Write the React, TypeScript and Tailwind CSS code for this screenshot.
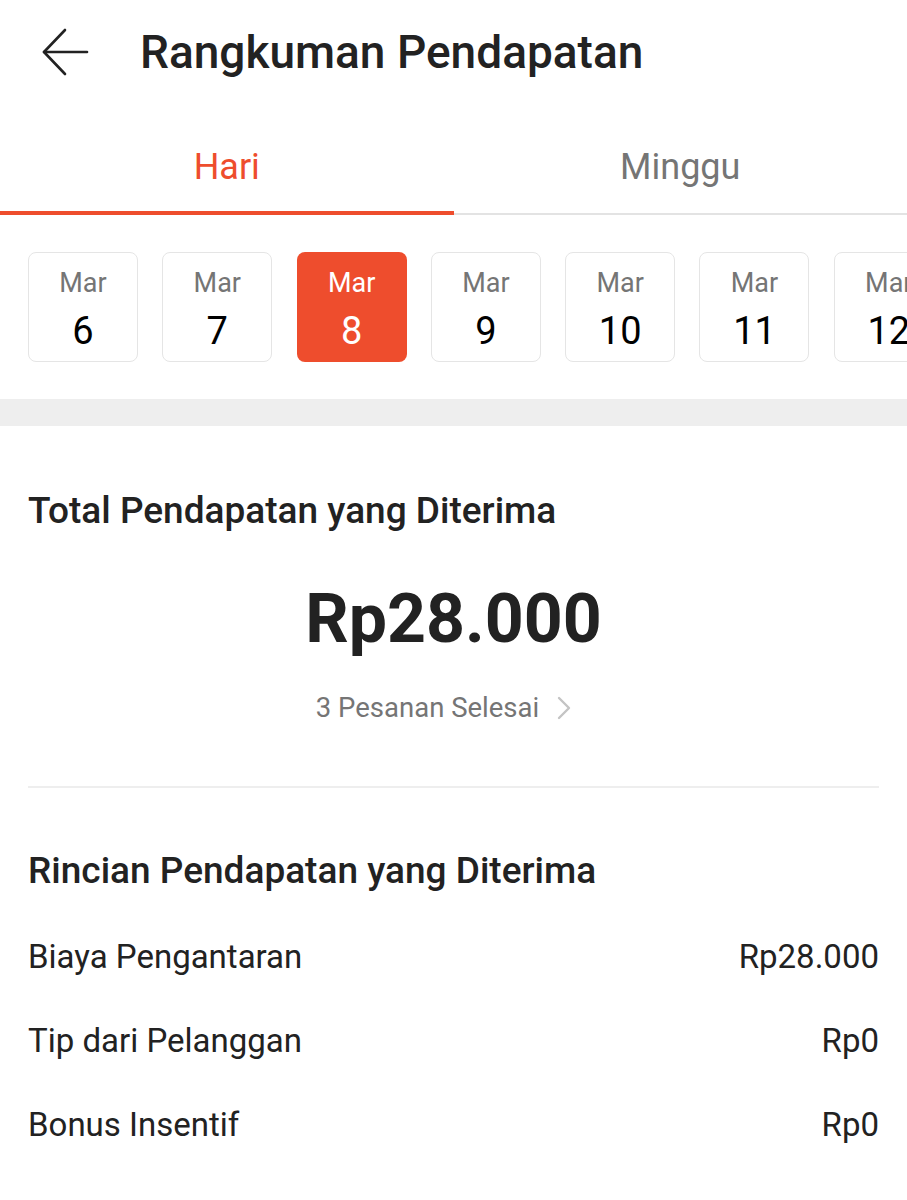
import React, { useState } from 'react';

interface DateItem {
    month: string;
    day: number;
}

const dates: DateItem[] = [
    { month: 'Mar', day: 6 },
    { month: 'Mar', day: 7 },
    { month: 'Mar', day: 8 },
    { month: 'Mar', day: 9 },
    { month: 'Mar', day: 10 },
    { month: 'Mar', day: 11 },
    { month: 'Mar', day: 12 },
];

const breakdown = [
    { label: 'Biaya Pengantaran', value: 'Rp28.000' },
    { label: 'Tip dari Pelanggan', value: 'Rp0' },
    { label: 'Bonus Insentif', value: 'Rp0' },
];

const App: React.FC = () => {
    const [tab, setTab] = useState<'day' | 'week'>('day');
    const [selected, setSelected] = useState(8);

    return (
        <div className="min-h-[1200px] w-full bg-white font-['Roboto',sans-serif] text-[#222222] overflow-hidden">
            {/* header */}
            <header className="flex items-center h-[104px] pl-[40px]">
                <button className="w-[50px] h-[50px] flex items-center justify-center text-[#222222]">
                    <svg width="48" height="48" viewBox="0 0 48 48" fill="none" stroke="currentColor" strokeWidth="2.6" strokeLinecap="round" strokeLinejoin="round">
                        <path d="M46 24H3" />
                        <path d="M24 2L3 24l21 22" />
                    </svg>
                </button>
                <h1 className="ml-[50px] text-[46px] font-medium leading-none">Rangkuman Pendapatan</h1>
            </header>

            {/* tabs */}
            <div className="flex h-[111px] border-b-2 border-[#e3e3e3]">
                <button
                    onClick={() => setTab('day')}
                    className={`flex-1 flex items-center justify-center pt-[18px] text-[36px] -mb-[2px] border-b-4 ${tab === 'day' ? 'text-[#ee4d2d] border-[#ee4d2d]' : 'text-[#757575] border-transparent'}`}
                >
                    Hari
                </button>
                <button
                    onClick={() => setTab('week')}
                    className={`flex-1 flex items-center justify-center pt-[18px] text-[36px] -mb-[2px] border-b-4 ${tab === 'week' ? 'text-[#ee4d2d] border-[#ee4d2d]' : 'text-[#757575] border-transparent'}`}
                >
                    Minggu
                </button>
            </div>

            <div className="flex gap-[24.3px] pl-[28px] pt-[37px] pb-[37px] overflow-hidden">
                {dates.map(d => {
                    const active = d.day === selected;
                    return (
                        <button
                            key={d.day}
                            onClick={() => setSelected(d.day)}
                            className={`shrink-0 w-[110px] h-[110px] rounded-[8px] flex flex-col items-center justify-center pt-[5px] ${active ? 'bg-[#ee4d2d] text-white' : 'bg-white border border-[#e5e5e5]'}`}
                        >
                            <span className={`text-[27px] leading-none ${active ? 'text-white' : 'text-[#757575]'}`}>{d.month}</span>
                            <span className={`mt-[15px] text-[38px] leading-none ${active ? 'text-white' : 'text-black'}`}>{d.day}</span>
                        </button>
                    );
                })}
            </div>

            <div className="h-[27px] bg-[#eeeeee]" />

            {/* total */}
            <section className="px-[28px]">
                <h2 className="pt-[66px] text-[37px] font-medium leading-none">Total Pendapatan yang Diterima</h2>
                <div className="mt-[56px] text-center text-[68px] font-bold leading-none">Rp28.000</div>
                <div className="mt-[34px] flex items-center justify-center gap-[18px] pr-[20px] text-[27.5px] text-[#757575]">
                    <span>3 Pesanan Selesai</span>
                    <svg width="14" height="24" viewBox="0 0 14 24" fill="none" stroke="#c4c4c4" strokeWidth="2.4" strokeLinecap="round" strokeLinejoin="round">
                        <path d="M2 2l10 10L2 22" />
                    </svg>
                </div>
                <div className="mt-[58px] h-[2px] bg-[#eeeeee]" />

                <h2 className="pt-[64px] text-[37px] font-medium leading-none">Rincian Pendapatan yang Diterima</h2>
                <div className="mt-[25px] flex flex-col">
                    {breakdown.map(row => (
                        <div key={row.label} className="flex items-center justify-between h-[84px] text-[33px]">
                            <span>{row.label}</span>
                            <span>{row.value}</span>
                        </div>
                    ))}
                </div>
            </section>
        </div>
    );
};

export default App;
